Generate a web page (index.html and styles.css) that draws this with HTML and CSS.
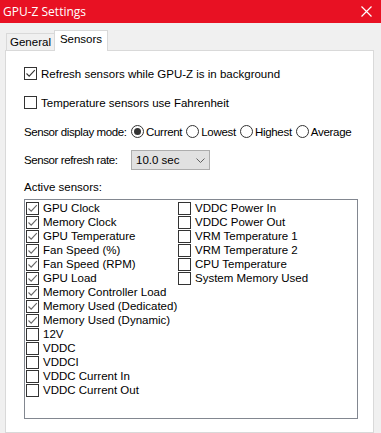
FILE: index.html
```html
<!DOCTYPE html>
<html lang="en">
<head>
    <meta charset="UTF-8">
    <title>GPU-Z Settings</title>
    <link rel="stylesheet" href="styles.css">
</head>
<body>

<div class="window">
    <div class="titlebar">
        <span class="title">GPU-Z Settings</span>
        <svg class="close" width="11" height="11" viewBox="0 0 11 11">
            <path d="M0.5 0.5 L10.5 10.5 M10.5 0.5 L0.5 10.5" stroke="#fff" stroke-width="1.2" fill="none"/>
        </svg>
    </div>

    <div class="tabs">
        <div class="tab">General</div>
        <div class="tab active">Sensors</div>
    </div>

    <div class="panel">
        <div class="row row-first">
            <span class="check on"><svg viewBox="0 0 11 11"><path d="M1.5 5.5 L4.2 8.2 L9.8 2.2" /></svg></span>
            <span class="label">Refresh sensors while GPU-Z is in background</span>
        </div>

        <div class="row row-second">
            <span class="check"></span>
            <span class="label">Temperature sensors use Fahrenheit</span>
        </div>

        <div class="row row-radios">
            <span class="field-label">Sensor display mode:</span>
            <span class="radio on"></span><span class="radio-label">Current</span>
            <span class="radio"></span><span class="radio-label">Lowest</span>
            <span class="radio"></span><span class="radio-label">Highest</span>
            <span class="radio"></span><span class="radio-label">Average</span>
        </div>

        <div class="row row-select">
            <span class="field-label">Sensor refresh rate:</span>
            <div class="select">
                <span>10.0 sec</span>
                <svg width="9" height="5" viewBox="0 0 9 5"><path d="M0.5 0.5 L4.5 4.5 L8.5 0.5" stroke="#606060" fill="none"/></svg>
            </div>
        </div>

        <div class="row row-active">Active sensors:</div>

        <div class="sensor-list">
            <div class="column" id="col-left"></div>
            <div class="column" id="col-right"></div>
        </div>
    </div>
</div>

<script>
    const leftSensors = [
        ['GPU Clock', true], ['Memory Clock', true], ['GPU Temperature', true],
        ['Fan Speed (%)', true], ['Fan Speed (RPM)', true], ['GPU Load', true],
        ['Memory Controller Load', true], ['Memory Used (Dedicated)', true],
        ['Memory Used (Dynamic)', true], ['12V', false], ['VDDC', false],
        ['VDDCI', false], ['VDDC Current In', false], ['VDDC Current Out', false]
    ];
    const rightSensors = [
        ['VDDC Power In', false], ['VDDC Power Out', false], ['VRM Temperature 1', false],
        ['VRM Temperature 2', false], ['CPU Temperature', false], ['System Memory Used', false]
    ];

    function fill(id, items) {
        const col = document.getElementById(id);
        items.forEach(([name, checked]) => {
            const item = document.createElement('div');
            item.className = 'item';
            const box = document.createElement('span');
            box.className = checked ? 'check flat on' : 'check flat';
            if (checked) {
                box.innerHTML = '<svg viewBox="0 0 11 11"><path d="M1.5 5.5 L4.2 8.2 L9.8 2.2" /></svg>';
            }
            const label = document.createElement('span');
            label.className = 'label';
            label.textContent = name;
            item.appendChild(box);
            item.appendChild(label);
            col.appendChild(item);
        });
    }

    fill('col-left', leftSensors);
    fill('col-right', rightSensors);
</script>

</body>
</html>
```

FILE: styles.css
```css
body {
    margin: 0;
    width: 381px;
    height: 433px;
    overflow: hidden;
    background-color: #f0f0f0;
    font-family: 'Liberation Sans', Arial, sans-serif;
    font-size: 11.5px;
    color: #000;
    white-space: nowrap;
}

.window {
    display: flex;
    flex-direction: column;
    height: 100%;
}

.titlebar {
    height: 23px;
    background-color: #e81123;
    display: flex;
    align-items: center;
    justify-content: space-between;
    padding: 0 9px 0 3px;
    flex-shrink: 0;
}

.title {
    font-family: 'Open Sans', sans-serif;
    font-size: 12px;
    color: #fff;
}

.close {
    display: block;
}

.tabs {
    display: flex;
    align-items: flex-end;
    margin-top: 7px;
    padding-left: 6px;
    height: 20px;
    flex-shrink: 0;
}

.tab {
    box-sizing: border-box;
    width: 49px;
    height: 17px;
    line-height: 17px;
    text-align: center;
    border: 1px solid #d9d9d9;
    border-bottom: none;
    background-color: #f0f0f0;
}

.tab.active {
    width: 54px;
    height: 21px;
    line-height: 17px;
    background-color: #fff;
    margin-left: -1px;
    margin-bottom: -1px;
    position: relative;
    z-index: 1;
}

.panel {
    flex: 1;
    margin: 0 7px 0 5px;
    background-color: #fff;
    border: 1px solid #d9d9d9;
    padding-left: 18px;
}

.row {
    display: flex;
    align-items: center;
    height: 15px;
}

.row-first {
    margin-top: 15px;
}

.row-second {
    margin-top: 14px;
}

.row-radios {
    margin-top: 14px;
}

.row-select {
    margin-top: 11px;
    height: 20px;
}

.row-active {
    margin-top: 10px;
    height: 14px;
}

.check {
    width: 11px;
    height: 11px;
    border: 1px solid #333;
    background-color: #fff;
    flex-shrink: 0;
    display: block;
}

.check svg {
    display: block;
    width: 11px;
    height: 11px;
}

.check svg path {
    fill: none;
    stroke: #333;
    stroke-width: 1.1;
}

.check.flat svg path {
    stroke: #666;
}

.label {
    margin-left: 4px;
}

.field-label {
    width: 107px;
    flex-shrink: 0;
    letter-spacing: -0.4px;
}

.radio {
    width: 11px;
    height: 11px;
    border: 1px solid #333;
    border-radius: 50%;
    background-color: #fff;
    flex-shrink: 0;
    display: flex;
    align-items: center;
    justify-content: center;
}

.radio.on::after {
    content: '';
    width: 7px;
    height: 7px;
    border-radius: 50%;
    background-color: #333;
}

.radio-label {
    margin-left: 2px;
    margin-right: 4px;
    letter-spacing: -0.3px;
}

.select {
    width: 69px;
    height: 18px;
    border: 1px solid #adadad;
    background-color: #e1e1e1;
    display: flex;
    align-items: center;
    justify-content: space-between;
    padding: 0 4px 0 4px;
}

.select svg {
    display: block;
}

.sensor-list {
    margin-top: 5px;
    box-sizing: border-box;
    width: 334px;
    height: 220px;
    border: 1px solid #828790;
    display: flex;
    padding: 1px 0 0 1px;
}

.column {
    width: 152px;
}

.item {
    display: flex;
    align-items: center;
    height: 14px;
}
```
